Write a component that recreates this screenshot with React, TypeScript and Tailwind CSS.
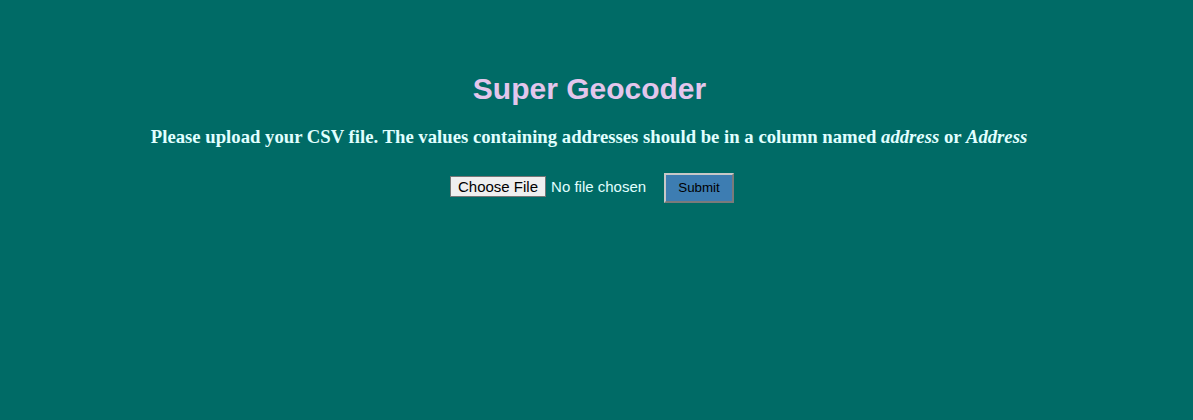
import React from "react";

export default function App() {
  return (
    <div className="min-h-[420px] w-full bg-[#006b66] pr-[14px]">
      <div className="flex flex-col items-center pt-[72px]">
        <h1
          className="text-[30px] leading-[34px] font-bold text-[#e3c6ec]"
          style={{ fontFamily: '"Liberation Sans", Arial, sans-serif' }}
        >
          Super Geocoder
        </h1>
        <h3
          className="mt-[20px] -ml-[1px] text-[18.72px] leading-[22px] font-bold text-[#e0ffff]"
          style={{ fontFamily: '"Liberation Serif", "Times New Roman", serif' }}
        >
          Please upload your CSV file. The values containing addresses should be in a column named{" "}
          <em>address</em> or <em>Address</em>
        </h3>
        <form
          className="mt-[25px] flex items-start gap-[4px] pl-[5px]"
          style={{ fontFamily: '"Liberation Sans", Arial, sans-serif' }}
        >
          <input
            type="file"
            className="mt-[3px] h-[21px] w-[210px] text-[15px] leading-[17px] text-[#e0ffff] file:mr-[5px] file:h-[21px] file:border file:border-[#767676] file:bg-[#efefef] file:px-[7px] file:py-0 file:text-black"
          />
          <button
            type="button"
            className="h-[30px] w-[70px] border-2 border-t-[#c8c8c8] border-l-[#c8c8c8] border-r-[#7a7a7a] border-b-[#7a7a7a] bg-[#3d7db2] text-[13.33px] text-black"
          >
            Submit
          </button>
        </form>
      </div>
    </div>
  );
}
